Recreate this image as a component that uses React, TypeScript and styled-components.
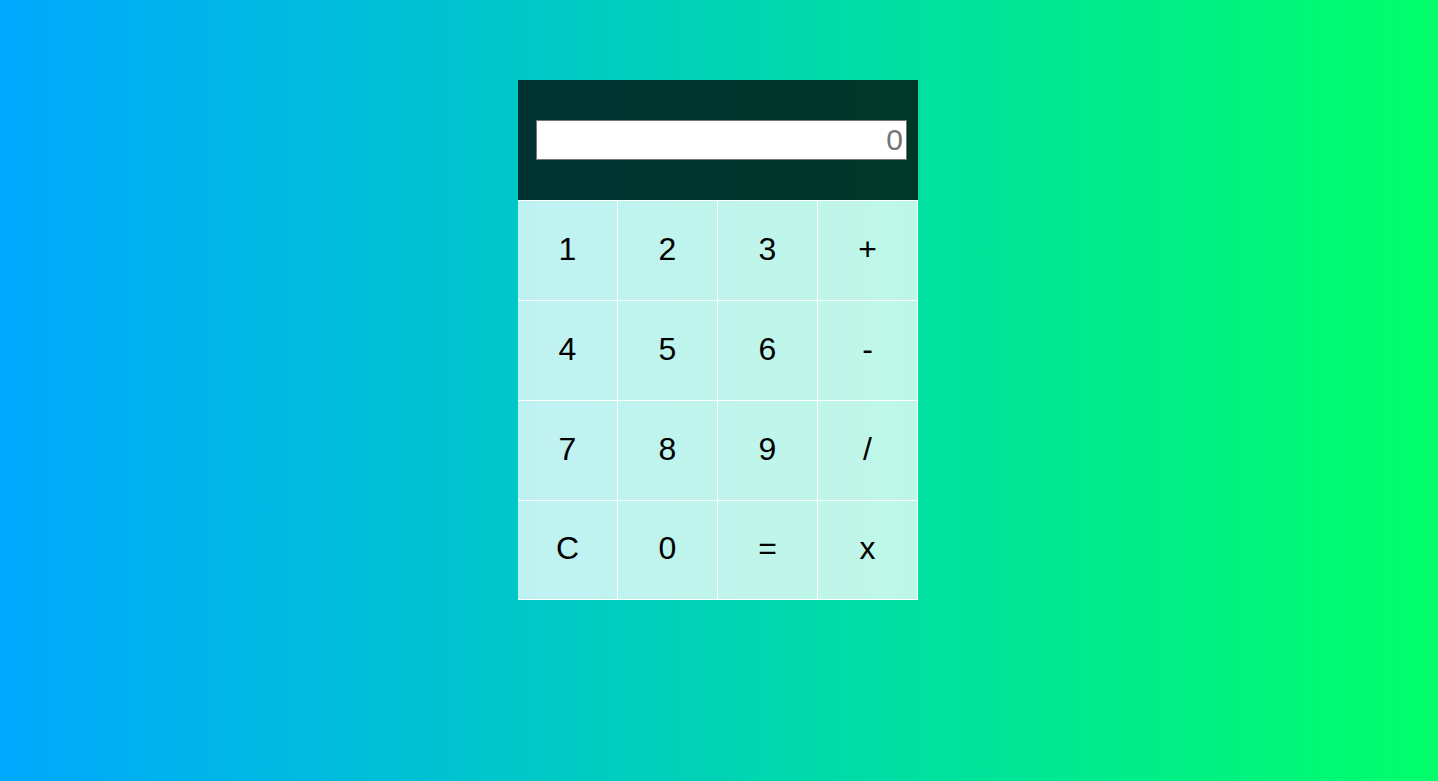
import React, { useState } from 'react';
import styled, { createGlobalStyle } from 'styled-components';

const GlobalStyle = createGlobalStyle`
  html, body {
    margin: 0;
    padding: 0;
    min-height: 100%;
  }
  body {
    font-family: "Liberation Sans", Arial, sans-serif;
    background: linear-gradient(90deg, #00a8ff 0%, #00ff6a 100%);
    min-height: 100vh;
  }
`;

const Page = styled.div`
  min-height: 100vh;
  padding-top: 80px;
  box-sizing: border-box;
`;

const Calculator = styled.div`
  width: 400px;
  margin-left: calc(50% - 201px);
`;

const Screen = styled.div`
  background: rgba(0, 0, 0, 0.75);
  padding: 40px 11px 40px 18px;
`;

const Display = styled.input`
  display: block;
  width: 100%;
  height: 40px;
  box-sizing: border-box;
  border: 1px solid #767676;
  padding: 1px 3px;
  font-family: "Liberation Sans", Arial, sans-serif;
  font-size: 30px;
  text-align: right;
  background: #fff;
  outline: none;

  &::placeholder {
    color: #757575;
  }
`;

const Keys = styled.div`
  display: grid;
  grid-template-columns: repeat(4, 100px);
  grid-auto-rows: 100px;
`;

const Key = styled.button<{ $lastRow?: boolean }>`
  box-sizing: border-box;
  border: none;
  border-top: 1px solid #fff;
  border-right: 1px solid #fff;
  border-bottom: ${p => (p.$lastRow ? '1px solid #fff' : 'none')};
  background: rgba(255, 255, 255, 0.75);
  font-family: "Liberation Sans", Arial, sans-serif;
  font-size: 32px;
  color: #000;
  padding: 0 0 3px;
  cursor: pointer;
`;

const layout = ['1', '2', '3', '+', '4', '5', '6', '-', '7', '8', '9', '/', 'C', '0', '=', 'x'];

export default function App() {
  const [value, setValue] = useState('');

  const press = (k: string) => {
    if (k === 'C') {
      setValue('');
      return;
    }
    if (k === '=') {
      try {
        const expr = value.replace(/x/g, '*');
        // eslint-disable-next-line no-new-func
        const result = Function(`return (${expr})`)();
        setValue(String(result));
      } catch (e) {
        setValue('');
      }
      return;
    }
    setValue(value + k);
  };

  return (
    <>
      <GlobalStyle />
      <Page>
        <Calculator>
          <Screen>
            <Display type="text" placeholder="0" value={value} readOnly />
          </Screen>
          <Keys>
            {layout.map((k, i) => (
              <Key key={k} $lastRow={i >= 12} onClick={() => press(k)}>
                {k}
              </Key>
            ))}
          </Keys>
        </Calculator>
      </Page>
    </>
  );
}
